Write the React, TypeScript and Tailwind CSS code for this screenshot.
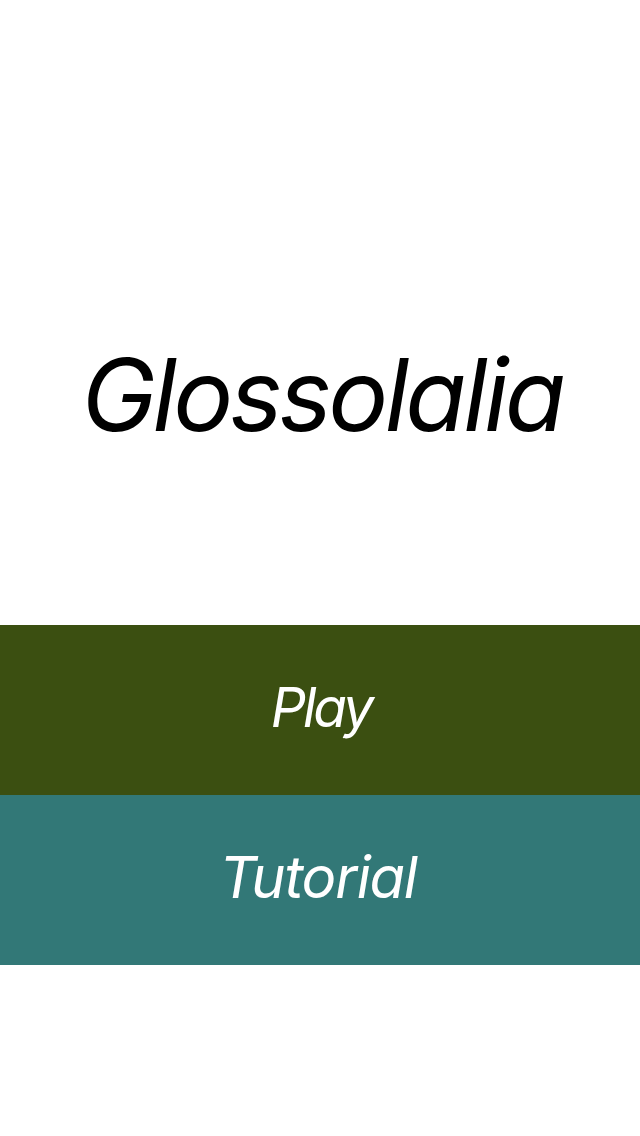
export default function App() {
  return (
    <div className="flex h-[1136px] w-[640px] flex-col bg-white font-['Inter',sans-serif] italic">
      {/* Title */}
      <div className="flex h-[625px] items-start justify-center pt-[345px]">
        <h1 className="pl-[4px] text-[100px] font-normal leading-[100px] tracking-[-3.5px] text-black">
          Glossolalia
        </h1>
      </div>

      {/* Menu */}
      <button className="flex h-[170px] w-full items-center justify-center bg-[#3b4f11] pb-[6px] pl-[2px] text-[55px] leading-none tracking-[-3px] text-white">
        Play
      </button>
      <button className="flex h-[170px] w-full items-center justify-center bg-[#327877] pb-[6px] pr-[4px] text-[58px] leading-none tracking-[-1.25px] text-white">
        Tutorial
      </button>
    </div>
  );
}
